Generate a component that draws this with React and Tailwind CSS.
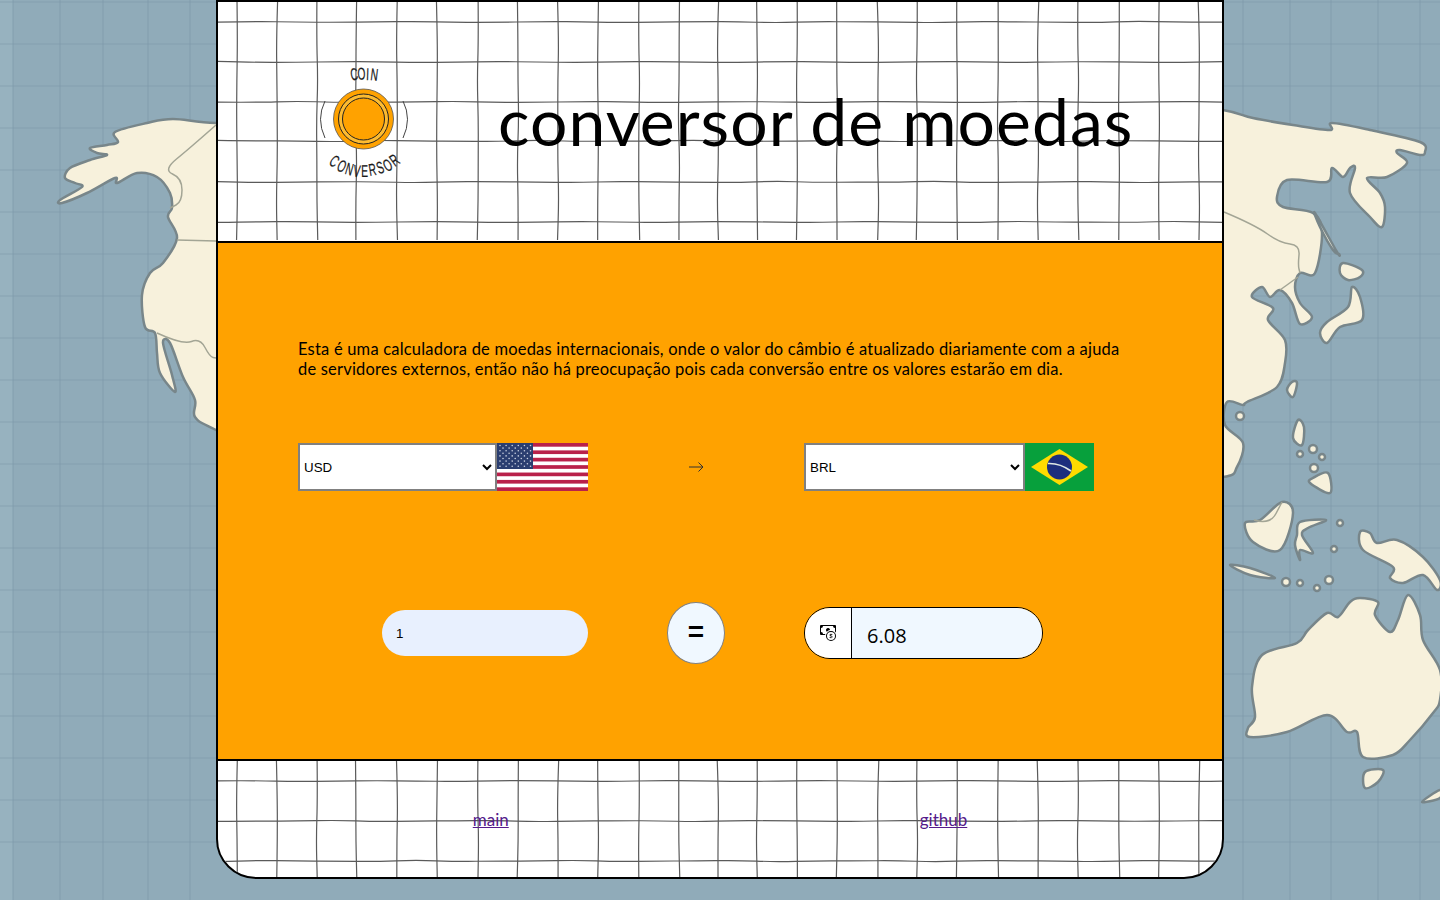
import React from 'react';
import { BsCashCoin } from 'react-icons/bs';

// smooth closed outline passing through a list of [x, y] points
const blob = (pts) => {
    const n = pts.length;
    let d = `M${pts[0][0]} ${pts[0][1]}`;
    for (let i = 0; i < n; i++) {
        const p0 = pts[(i - 1 + n) % n];
        const p1 = pts[i];
        const p2 = pts[(i + 1) % n];
        const p3 = pts[(i + 2) % n];
        const c1x = p1[0] + (p2[0] - p0[0]) / 6;
        const c1y = p1[1] + (p2[1] - p0[1]) / 6;
        const c2x = p2[0] - (p3[0] - p1[0]) / 6;
        const c2y = p2[1] - (p3[1] - p1[1]) / 6;
        d += ` C${c1x.toFixed(1)} ${c1y.toFixed(1)} ${c2x.toFixed(1)} ${c2y.toFixed(1)} ${p2[0]} ${p2[1]}`;
    }
    return d + ' Z';
};

const line = (pts) => {
    let d = `M${pts[0][0]} ${pts[0][1]}`;
    for (let i = 1; i < pts.length - 1; i++) {
        const mx = (pts[i][0] + pts[i + 1][0]) / 2;
        const my = (pts[i][1] + pts[i + 1][1]) / 2;
        d += ` Q${pts[i][0]} ${pts[i][1]} ${mx} ${my}`;
    }
    const last = pts[pts.length - 1];
    return d + ` L${last[0]} ${last[1]}`;
};

// points read off the map, page coordinates
const west = [[300, 123], [216, 123], [173, 119], [147, 123], [115, 132], [118, 142], [107, 145], [90, 148], [97, 153], [107, 155], [90, 160], [70, 168], [65, 178], [75, 183], [82, 187], [60, 200], [62, 203], [87, 193], [115, 178], [117, 183], [137, 173], [157, 177], [170, 193], [172, 208], [168, 217], [177, 238], [163, 263], [150, 273], [142, 295], [145, 327], [155, 333], [157, 353], [160, 373], [175, 392], [172, 375], [163, 343], [170, 343], [183, 377], [195, 400], [195, 417], [216, 430], [300, 470]];
const asia = [[1150, 100], [1223, 110], [1253, 118], [1293, 125], [1330, 130], [1332, 123], [1370, 130], [1420, 142], [1425, 152], [1420, 155], [1400, 150], [1397, 153], [1407, 163], [1387, 177], [1367, 178], [1380, 193], [1385, 207], [1382, 227], [1370, 217], [1350, 193], [1355, 168], [1350, 168], [1343, 177], [1332, 168], [1327, 182], [1287, 180], [1277, 197], [1283, 207], [1313, 213], [1322, 233], [1315, 273], [1300, 273], [1295, 287], [1300, 303], [1312, 317], [1300, 324], [1292, 303], [1280, 290], [1270, 297], [1262, 287], [1252, 297], [1273, 308], [1268, 320], [1285, 340], [1285, 363], [1277, 387], [1247, 402], [1243, 405], [1227, 402], [1225, 425], [1243, 443], [1237, 467], [1223, 477], [1150, 480]];
const islands = [
    [[1315, 213], [1337, 252], [1339, 254], [1333, 250], [1320, 227]],
    [[1340, 273], [1343, 263], [1362, 270], [1360, 277], [1348, 280]],
    [[1352, 287], [1360, 297], [1362, 320], [1340, 327], [1327, 343], [1320, 333], [1327, 322], [1348, 307]],
    [[1292, 382], [1297, 383], [1293, 397], [1287, 390]],
    [[1298, 420], [1304, 427], [1302, 445], [1293, 438]],
    [[1313, 478], [1328, 473], [1330, 493], [1310, 483]],
    [[1282, 502], [1293, 513], [1280, 550], [1253, 542], [1245, 523], [1260, 520]],
    [[1230, 565], [1250, 568], [1275, 578], [1250, 575]],
    [[1300, 522], [1326, 520], [1308, 528], [1302, 535], [1313, 553], [1300, 550], [1300, 560], [1295, 545], [1297, 535]],
    [[1360, 532], [1370, 533], [1377, 543], [1397, 540], [1423, 557], [1440, 580], [1437, 590], [1423, 575], [1403, 583], [1390, 578], [1393, 567], [1363, 550]],
    [[1360, 598], [1378, 602], [1375, 615], [1390, 632], [1398, 620], [1408, 595], [1420, 615], [1423, 640], [1440, 670], [1440, 700], [1433, 713], [1410, 740], [1393, 755], [1363, 757], [1357, 732], [1347, 732], [1327, 715], [1287, 732], [1250, 737], [1248, 728], [1255, 717], [1252, 687], [1262, 655], [1297, 643], [1308, 630], [1327, 613], [1338, 617], [1350, 602]],
    [[1365, 772], [1383, 770], [1378, 782], [1365, 788]],
    [[1422, 802], [1440, 790], [1440, 798]],
];
const dots = [[1240, 416, 4], [1300, 454, 3], [1313, 449, 4], [1322, 457, 3], [1314, 468, 4], [1286, 582, 4], [1300, 583, 3], [1317, 588, 3], [1329, 580, 4], [1334, 549, 3], [1340, 523, 3]];
const borders = [
    [[216, 125], [190, 148], [163, 170], [182, 178], [182, 202], [170, 208]],
    [[177, 240], [216, 241]],
    [[157, 333], [183, 345], [200, 338], [210, 357], [216, 358]],
    [[1224, 212], [1255, 225], [1280, 243], [1300, 245], [1298, 265], [1300, 273]],
    [[1280, 290], [1298, 277]],
    [[1254, 520], [1270, 525], [1282, 502]],
];

const WorldMap = () => (
    <svg className="absolute inset-0 w-[1440px] h-[900px] blur-[0.6px]" viewBox="0 0 1440 900">
        <rect width="1440" height="900" fill="#90abb9" />
        <rect width="13" height="900" fill="#97b2bf" />
        {[13, 60, 103, 148, 190, 1243, 1290, 1331, 1378, 1420].map((x) => (
            <path key={x} d={`M${x} 0V900`} stroke="#7d99aa" strokeWidth="2" opacity="0.35" />
        ))}
        {Array.from({ length: 21 }, (_, i) => (
            <path key={i} d={`M0 ${i * 42 + 2}H1440`} stroke="#7d99aa" strokeWidth="2" opacity="0.3" />
        ))}
        <g fill="#f7f1dc" stroke="#78868a" strokeWidth="2.5" strokeLinejoin="round">
            <path d={blob(west)} />
            <path d={blob(asia)} />
            {islands.map((p, i) => <path key={i} d={blob(p)} />)}
            {dots.map(([x, y, r]) => <circle key={x} cx={x} cy={y} r={r} />)}
        </g>
        <g fill="none" stroke="#a3a595" strokeWidth="1.5">
            {borders.map((p, i) => <path key={i} d={line(p)} />)}
        </g>
    </svg>
);

// hand drawn looking squares, coordinates are relative to the card
const wobble = (i, k) => Math.sin(i * 2.3 + k * 1.7) * 0.5 + Math.sin(i * 0.7 + k * 3.1) * 0.4;
const COLS = [21, 61, 101, 140, 181, 221, 262, 302, 342, 382, 423, 463, 502, 541, 581, 621, 662, 701, 741, 782, 822, 862, 903, 943, 983];
const ROWS = [22, 62, 102, 141, 182, 222, 781, 821, 861];

const PaperGrid = () => (
    <svg className="w-[1008px] h-[879px] blur-[0.3px]" viewBox="0 0 1008 879" fill="none" stroke="#5a5a5a" strokeWidth="1.2">
        {COLS.map((x, i) => (
            <React.Fragment key={x}>
                <path d={line(Array.from({ length: 7 }, (_, k) => [x + wobble(i, k), k * 40]))} />
                <path d={line(Array.from({ length: 4 }, (_, k) => [x + wobble(i, k + 9), 759 + k * 40]))} />
            </React.Fragment>
        ))}
        {ROWS.map((y, i) => (
            <path key={y} d={line(Array.from({ length: 27 }, (_, k) => [k * 40, y + wobble(i + 4, k)]))} />
        ))}
    </svg>
);

// letters sit one by one on the arc, squeezed to look like a condensed face
const COIN_LETTERS = [['C', 44, 15, -8], ['O', 51.5, 14.5, -3], ['I', 57.5, 15, 2], ['N', 64.5, 15.5, 7]];
const BOTTOM_LETTERS = [['C', 24.5, 102], ['O', 32, 107], ['N', 39.5, 110], ['V', 47, 112], ['E', 54.5, 112], ['R', 62.5, 110.5], ['S', 70, 108.5], ['O', 77.5, 106], ['R', 84.5, 101]];

const CoinLogo = () => (
    <svg className="w-[110px] h-[125px]" viewBox="0 0 110 125">
        <g fill="#1a1a1a" fontSize="17" textAnchor="middle" fontFamily="'Liberation Sans', sans-serif" stroke="#1a1a1a" strokeWidth="0.25">
            {COIN_LETTERS.map(([ch, x, y, a]) => (
                <text key={ch} transform={`translate(${x} ${y}) rotate(${a}) scale(0.6 1) translate(0 6)`}>{ch}</text>
            ))}
            {BOTTOM_LETTERS.map(([ch, x, y], i) => (
                <text key={i} transform={`translate(${x} ${y}) rotate(${((Math.atan2(54 - x, y - 60) * 180) / Math.PI).toFixed(1)}) scale(0.6 1) translate(0 6)`}>{ch}</text>
            ))}
        </g>
        <circle cx="53.5" cy="60" r="30" fill="#ffa200" stroke="#555" strokeWidth="0.8" />
        <circle cx="53.5" cy="60" r="25" fill="#fdbb30" stroke="#222" strokeWidth="1" />
        <circle cx="53.5" cy="60" r="21" fill="#ffa200" stroke="#222" strokeWidth="1" />
        <path d="M15 42 Q6 60 15 79 M93 42 Q102 60 93 79" fill="none" stroke="#444" strokeWidth="1" />
    </svg>
);

const UsFlag = () => (
    <svg className="w-[91px] h-[48px] shrink-0" viewBox="0 0 91 48" preserveAspectRatio="none">
        <rect width="91" height="48" fill="#fff" />
        {[0, 2, 4, 6, 8, 10, 12].map((i) => (
            <rect key={i} y={(i * 48) / 13} width="91" height={48 / 13} fill="#b9214a" />
        ))}
        <rect width="36" height="26" fill="#2b3e70" />
        {Array.from({ length: 9 }, (_, r) =>
            Array.from({ length: r % 2 ? 5 : 6 }, (_, c) => (
                <circle key={`${r}-${c}`} cx={(r % 2 ? 6 : 3) + c * 6.1} cy={2.5 + r * 2.6} r="0.8" fill="#c9d0e0" />
            ))
        )}
    </svg>
);

const BrFlag = () => (
    <svg className="w-[69px] h-[48px] shrink-0" viewBox="0 0 69 48">
        <rect width="69" height="48" fill="#07a03c" />
        <path d="M6 24 L34.5 6 L63 24 L34.5 42 Z" fill="#fedb00" />
        <circle cx="34.5" cy="24" r="12.5" fill="#1c2f7d" />
        <path d="M23 20.5 Q35 20 46 28" fill="none" stroke="#dfe9e4" strokeWidth="1.6" />
    </svg>
);

const CurrencySelect = ({ value, width }) => (
    <select
        defaultValue={value}
        className={`${width} h-12 bg-white border-2 border-[#808080] text-[13.33px] text-black font-['Liberation_Sans',sans-serif]`}
    >
        <option>{value}</option>
    </select>
);

export default function App() {
    return (
        <div className="relative w-[1440px] h-[900px] overflow-hidden font-['Lato',sans-serif]">
            <WorldMap />
            <div className="relative mx-auto w-[1008px] h-[879px] bg-white border-2 border-black rounded-b-[40px] overflow-hidden">
                <div className="absolute -left-[2px] -top-[2px]">
                    <PaperGrid />
                </div>

                <header className="relative h-[239px] flex items-center pl-[92px]">
                    <div className="w-[188px]">
                        <CoinLogo />
                    </div>
                    <h1 className="text-[66px] leading-none text-black tracking-[1.05px] whitespace-nowrap mb-[2px]">conversor de moedas</h1>
                </header>

                <main className="relative h-[520px] bg-[#ffa200] border-y-2 border-black px-[80px] pt-[96px]">
                    <p className="text-[16.5px] leading-[20px] tracking-[0.2px] text-black w-[830px]">
                        Esta é uma calculadora de moedas internacionais, onde o valor do câmbio é atualizado diariamente com a ajuda de servidores externos, então não há preocupação pois cada conversão entre os valores estarão em dia.
                    </p>

                    <div className="flex items-center mt-[64px]">
                        <div className="flex w-[290px]">
                            <CurrencySelect value="USD" width="w-[199px]" />
                            <UsFlag />
                        </div>
                        <div className="flex justify-center w-[216px]">
                            <svg className="w-[16px] h-[12px]" viewBox="0 0 16 12" fill="none" stroke="#333" strokeWidth="1">
                                <path d="M1 6H15M10.5 1.5L15 6L10.5 10.5" />
                            </svg>
                        </div>
                        <div className="flex">
                            <CurrencySelect value="BRL" width="w-[221px]" />
                            <BrFlag />
                        </div>
                    </div>

                    <div className="flex items-center mt-[111px]">
                        <div className="flex justify-end w-[290px]">
                            <input
                                defaultValue="1"
                                className="w-[206px] h-[46px] rounded-full bg-[#e8f0fe] pl-[14px] text-[13.33px] text-black font-['Liberation_Sans',sans-serif]"
                            />
                        </div>
                        <div className="flex justify-center w-[216px]">
                            <button className="w-[58px] h-[62px] pb-[2px] rounded-[50%] bg-[#f0f8ff] border border-[#808080] text-[28px] font-bold leading-none text-black font-['Liberation_Sans',sans-serif]">=</button>
                        </div>
                        <div className="flex w-[239px] h-[52px] rounded-full border border-black overflow-hidden">
                            <span className="flex items-center justify-center w-[47px] bg-white border-r border-black">
                                <BsCashCoin size={16} className="text-black" />
                            </span>
                            <span className="flex-1 flex items-center pl-[15px] pt-[5px] bg-[#f0f8ff] text-[20px] text-black font-['Open_Sans',sans-serif]">6.08</span>
                        </div>
                    </div>
                </main>

                <footer className="relative h-[116px] flex justify-center gap-[411px] pt-[49px] text-[17px] leading-[20px]">
                    <a href="#main" className="underline text-[#551a8b] h-fit">main</a>
                    <a href="#github" className="underline text-[#551a8b] h-fit">github</a>
                </footer>
            </div>
        </div>
    );
}
